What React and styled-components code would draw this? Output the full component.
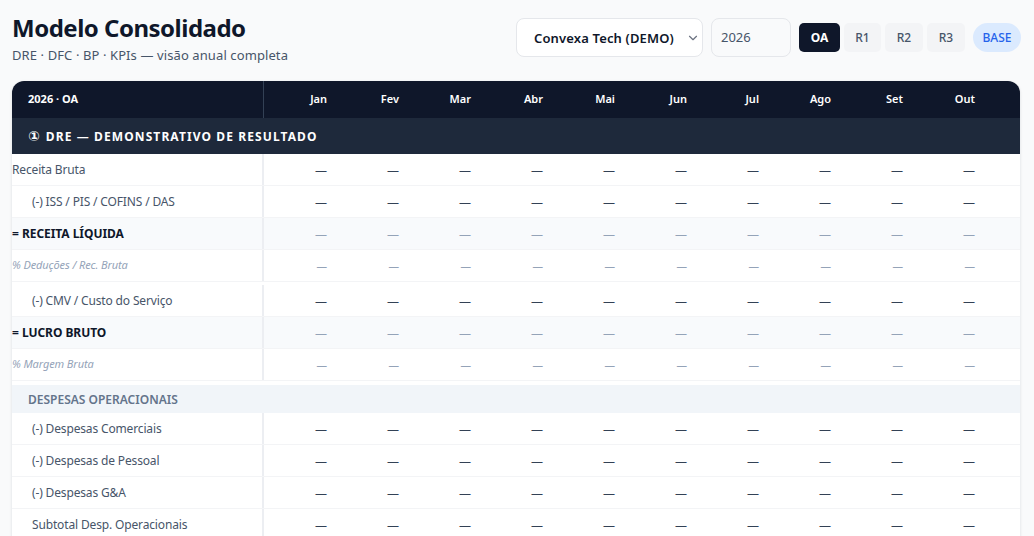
import React from "react";
import styled, { createGlobalStyle } from "styled-components";
import { LuChevronDown } from "react-icons/lu";

const months = ["Jan", "Fev", "Mar", "Abr", "Mai", "Jun", "Jul", "Ago", "Set", "Out"];

const GlobalStyle = createGlobalStyle`
  html, body {
    margin: 0;
    height: 100%;
    overflow: hidden;
    background: #f9fafb;
    font-family: "Noto Sans", "Open Sans", sans-serif;
  }
  * { box-sizing: border-box; }
`;

const Page = styled.div`
  width: 1034px;
  height: 536px;
  padding: 13px 14px 0 12px;
  overflow: hidden;
`;
const TopBar = styled.div`
  display: flex;
  justify-content: space-between;
  align-items: flex-start;
  height: 68px;
`;
const TitleBlock = styled.div`
  display: flex;
  flex-direction: column;
`;
const Title = styled.h1`
  margin: 0;
  font-size: 24px;
  line-height: 30px;
  font-weight: 700;
  letter-spacing: -0.5px;
  color: #0f172a;
`;
const Subtitle = styled.div`
  margin-top: 3px;
  font-size: 13px;
  line-height: 18px;
  letter-spacing: 0.1px;
  color: #475569;
`;
const Controls = styled.div`
  display: flex;
  align-items: center;
  margin: 5px -1px 0 0;
  height: 39px;
`;
const SelectBox = styled.div`
  display: flex;
  align-items: center;
  justify-content: space-between;
  width: 187px;
  height: 39px;
  padding: 0 2px 0 17px;
  margin-right: 8px;
  background: #ffffff;
  border: 1px solid #e5e7eb;
  border-radius: 8px;
  font-size: 13px;
  font-weight: 600;
  letter-spacing: 0.15px;
  color: #0f172a;
`;
const YearBox = styled.div`
  display: flex;
  align-items: center;
  width: 80px;
  height: 39px;
  padding: 0 0 2px 9px;
  margin-right: 8px;
  border: 1px solid #e5e7eb;
  border-radius: 8px;
  font-size: 13px;
  color: #475569;
`;
const VersionButton = styled.div`
  display: flex;
  align-items: center;
  justify-content: center;
  width: ${(p) => p.$width}px;
  height: 29px;
  margin-right: 4px;
  border-radius: 5px;
  font-size: 12px;
  font-weight: ${(p) => (p.$active ? 700 : 500)};
  color: ${(p) => (p.$active ? "#ffffff" : "#475569")};
  background: ${(p) => (p.$active ? "#0f172a" : "#f3f4f6")};
`;
const BasePill = styled.div`
  display: flex;
  align-items: center;
  justify-content: center;
  width: 48px;
  height: 29px;
  margin-left: 4px;
  border-radius: 15px;
  font-size: 12px;
  font-weight: 500;
  color: #2563eb;
  background: #dbeafe;
`;
const Card = styled.div`
  width: 1008px;
  border-radius: 12px 12px 0 0;
  background: #ffffff;
  box-shadow: 0 1px 3px rgba(15, 23, 42, 0.14);
  overflow: hidden;
`;
const Row = styled.div`
  display: grid;
  grid-template-columns: 252px repeat(10, 72px);
  height: ${(p) => p.$height || 32}px;
  background: ${(p) => p.$bg || "#ffffff"};
  border-bottom: ${(p) => (p.$noLine ? "none" : "1px solid #f3f4f6")};
`;
const HeadLabel = styled.div`
  display: flex;
  align-items: center;
  padding: 0 0 2px 16px;
  border-right: 1px solid #334155;
  font-size: 11px;
  font-weight: 700;
  color: #ffffff;
`;
const HeadCell = styled.div`
  display: flex;
  align-items: center;
  justify-content: flex-end;
  padding: 0 9px 2px 0;
  font-size: 11px;
  font-weight: 600;
  color: #ffffff;
`;
const SectionBar = styled.div`
  display: flex;
  align-items: center;
  gap: 6px;
  height: 36px;
  padding-left: 16px;
  background: #1e293b;
  font-size: 12px;
  font-weight: 700;
  letter-spacing: 1.1px;
  color: #ffffff;
`;
const SectionNumber = styled.span`
  font-family: "DejaVu Sans", sans-serif;
  font-size: 14px;
  letter-spacing: 0;
`;
const Label = styled.div`
  display: flex;
  align-items: center;
  padding-left: ${(p) => (p.$indent ? 20 : 0)}px;
  padding-bottom: ${(p) => (p.$kind === "pct" ? 2 : 0)}px;
  border-right: 2px solid #eceef2;
  font-size: ${(p) => (p.$kind === "pct" ? 11 : 12)}px;
  font-weight: ${(p) => (p.$kind === "total" ? 700 : 400)};
  font-style: ${(p) => (p.$kind === "pct" ? "italic" : "normal")};
  letter-spacing: ${(p) => (p.$kind === "line" ? -0.15 : p.$kind === "pct" ? -0.1 : -0.05)}px;
  color: ${(p) =>
    p.$kind === "total" ? "#0f172a" : p.$kind === "pct" ? "#94a3b8" : "#475569"};
`;
const Cell = styled.div`
  display: flex;
  align-items: center;
  justify-content: flex-end;
  padding-top: ${(p) => (p.$kind === "pct" ? 0 : 1)}px;
  padding-right: 9px;
  font-size: ${(p) => (p.$kind === "pct" ? 11 : 12)}px;
  font-style: ${(p) => (p.$kind === "pct" ? "italic" : "normal")};
  color: ${(p) => (p.$kind === "line" ? "#334155" : "#94a3b8")};
`;
const Spacer = styled.div`
  height: ${(p) => p.$height}px;
  background: #ffffff;
`;
const GroupBar = styled.div`
  display: flex;
  align-items: center;
  height: 28px;
  padding-left: 16px;
  background: #f1f5f9;
  font-size: 12px;
  font-weight: 600;
  color: #64748b;
`;

function DataRow({ label, kind = "line", indent }) {
  return (
    <Row $bg={kind === "total" ? "#f8fafc" : undefined}>
      <Label $kind={kind} $indent={indent}>{label}</Label>
      {months.map((m) => (
        <Cell key={m} $kind={kind}>—</Cell>
      ))}
    </Row>
  );
}

export default function App() {
  return (
    <Page>
      <GlobalStyle />
      <TopBar>
        <TitleBlock>
          <Title>Modelo Consolidado</Title>
          <Subtitle>DRE · DFC · BP · KPIs — visão anual completa</Subtitle>
        </TitleBlock>
        <Controls>
          <SelectBox>
            Convexa Tech (DEMO)
            <LuChevronDown size={14} color="#6b7280" />
          </SelectBox>
          <YearBox>2026</YearBox>
          <VersionButton $active $width={41}>OA</VersionButton>
          <VersionButton $width={37}>R1</VersionButton>
          <VersionButton $width={38}>R2</VersionButton>
          <VersionButton $width={38}>R3</VersionButton>
          <BasePill>BASE</BasePill>
        </Controls>
      </TopBar>
      <Card>
        <Row $height={37} $bg="#0f172a" $noLine>
          <HeadLabel>2026 · OA</HeadLabel>
          {months.map((m) => (
            <HeadCell key={m}>{m}</HeadCell>
          ))}
        </Row>
        <SectionBar>
          <SectionNumber>①</SectionNumber>
          DRE — DEMONSTRATIVO DE RESULTADO
        </SectionBar>
        <DataRow label="Receita Bruta" />
        <DataRow label="(-) ISS / PIS / COFINS / DAS" indent />
        <DataRow label="= RECEITA LÍQUIDA" kind="total" />
        <DataRow label="% Deduções / Rec. Bruta" kind="pct" />
        <Spacer $height={3} />
        <DataRow label="(-) CMV / Custo do Serviço" indent />
        <DataRow label="= LUCRO BRUTO" kind="total" />
        <DataRow label="% Margem Bruta" kind="pct" />
        <Spacer $height={4} />
        <GroupBar>DESPESAS OPERACIONAIS</GroupBar>
        <DataRow label="(-) Despesas Comerciais" indent />
        <DataRow label="(-) Despesas de Pessoal" indent />
        <DataRow label="(-) Despesas G&A" indent />
        <DataRow label="Subtotal Desp. Operacionais" indent />
      </Card>
    </Page>
  );
}
